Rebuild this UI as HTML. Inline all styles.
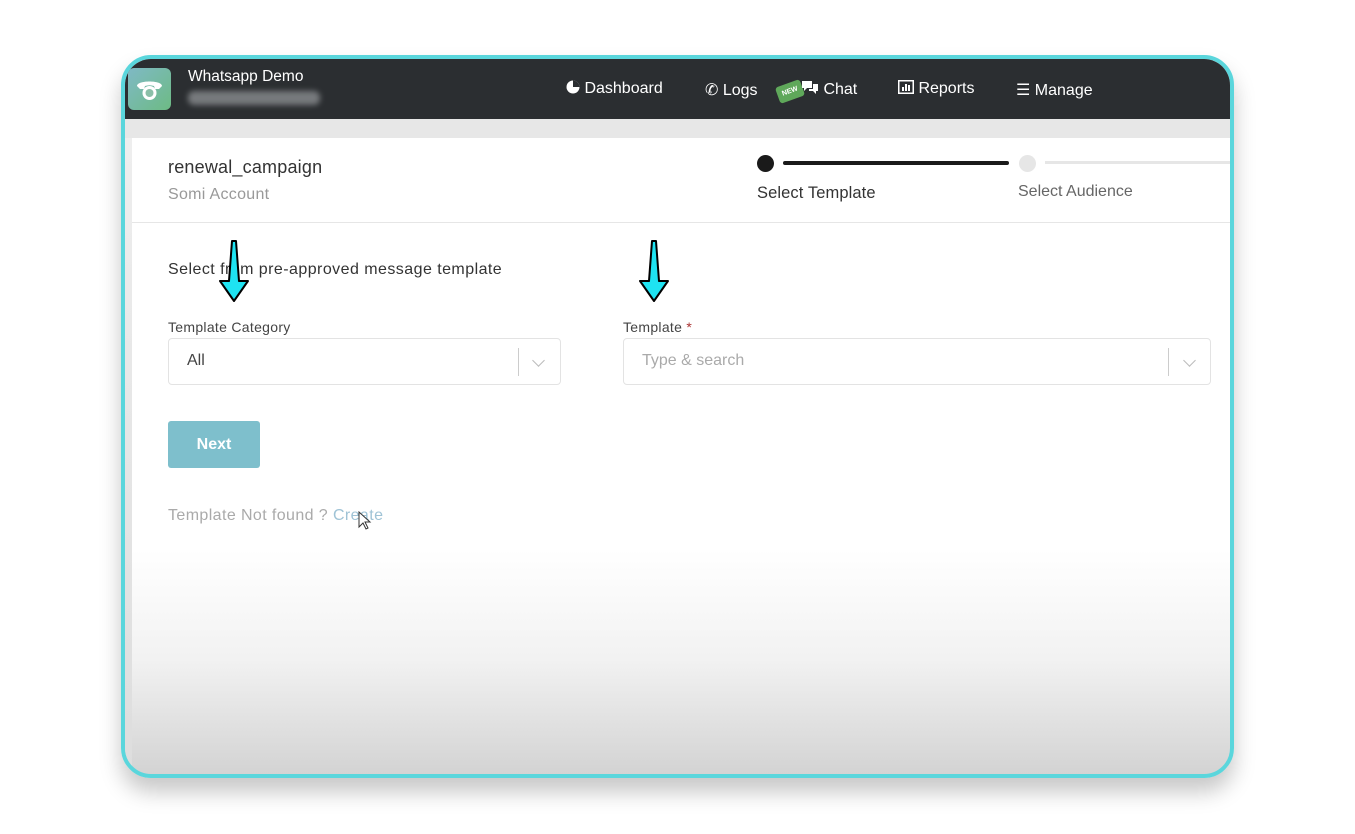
<!DOCTYPE html>
<html><head><meta charset="utf-8"><style>
*{margin:0;padding:0;box-sizing:border-box}
body{width:1355px;height:834px;background:#fff;position:relative;overflow:hidden;font-family:"Liberation Sans",sans-serif}
.frame{position:absolute;left:121px;top:55px;width:1113px;height:723px;border:4px solid #5ad6dc;border-radius:30px;overflow:hidden;box-shadow:0 14px 22px rgba(0,0,0,0.22);background:linear-gradient(#fff 0,#fff 490px,#f2f2f2 600px,#d3d3d3 715px)}
.nav{position:absolute;left:0;top:0;right:0;height:60px;background:#2b2e31;color:#fff}
.logo{position:absolute;left:3px;top:9px;width:43px;height:42px;border-radius:6px;background:linear-gradient(135deg,#7fb9c5,#6dbb84)}
.brand{position:absolute;left:63px;top:9px;font-size:15.5px}
.blur{position:absolute;left:63px;top:32px;width:132px;height:14px;background:#8a8d90;border-radius:6px;filter:blur(3px);opacity:.8}
.nl{position:absolute;top:21px;font-size:16px;color:#fff}
.band{position:absolute;left:0;top:60px;right:0;height:19px;background:#e7e7e7}
.side{position:absolute;left:0;top:79px;width:7px;bottom:0;background:linear-gradient(#eee,#ddd)}
.hdr{position:absolute;left:7px;top:79px;right:0;height:85px;border-bottom:1px solid #e6e6e6}
.t{position:absolute;color:#333;white-space:nowrap}
.sel{position:absolute;height:47px;border:1px solid #e3e3e3;border-radius:4px;background:#fff}
.sel .v{position:absolute;left:18px;top:13px;font-size:16px}
.sel .sep{position:absolute;top:9px;width:1px;height:28px;background:#ccc}
.chev{position:absolute;top:17px;width:9px;height:9px;border-right:1.5px solid #bbb;border-bottom:1.5px solid #bbb;transform:rotate(45deg)}
.btn{position:absolute;left:43px;top:362px;width:92px;height:47px;background:#7ebfcc;border-radius:3px;color:#fff;font-size:16px;font-weight:bold;text-align:center;line-height:47px}
</style></head><body>
<div class="frame">
 <div class="nav">
  <div class="logo"><svg width="43" height="42" viewBox="0 0 43 42"><path d="M9 18c0-6 25-6 25 0l-3 3h-4l-1-3c-3-1-6-1-9 0l-1 3h-4z" fill="#fff"/><circle cx="21.5" cy="25" r="7" fill="#fff"/><circle cx="21.5" cy="25" r="4" fill="#8bbfa8"/></svg></div>
  <div class="brand">Whatsapp Demo</div>
  <div class="blur"></div>
  <div class="nl" style="left:441px"><svg width="14" height="14" viewBox="0 0 14 14" style="vertical-align:-1px"><circle cx="7" cy="7" r="6.5" fill="#fff"/><path d="M7 7V0.5A6.5 6.5 0 0 1 13.5 7z" fill="#2b2e31"/></svg> Dashboard</div>
  <div class="nl" style="left:580px">✆ Logs</div>
  <div style="position:absolute;left:652px;top:24px;width:26px;height:17px;background:#5fa85a;border-radius:3px;transform:rotate(-20deg);font-size:7px;color:#fff;text-align:center;line-height:17px;font-weight:bold">NEW</div>
  <div class="nl" style="left:676px"><svg width="18" height="16" viewBox="0 0 18 16" style="vertical-align:-2px"><path d="M1 1h10v7H6l-3 3V8H1z" fill="#fff"/><path d="M12 4h5v7h-2v3l-3-3H8V9h4z" fill="#fff"/></svg> Chat</div>
  <div class="nl" style="left:773px"><svg width="16" height="14" viewBox="0 0 16 14" style="vertical-align:-1px"><rect x="0.75" y="0.75" width="14.5" height="12.5" fill="none" stroke="#fff" stroke-width="1.5"/><rect x="4" y="7" width="2" height="4" fill="#fff"/><rect x="7" y="4" width="2" height="7" fill="#fff"/><rect x="10" y="5" width="2" height="6" fill="#fff"/></svg> Reports</div>
  <div class="nl" style="left:891px">☰ Manage</div>
 </div>
 <div class="band"></div>
 <div class="side"></div>
 <div class="hdr"></div>
 <div class="t" style="left:43px;top:98px;font-size:18px;letter-spacing:0.2px">renewal_campaign</div>
 <div class="t" style="left:43px;top:127px;font-size:16px;color:#999;letter-spacing:0.3px">Somi Account</div>
 <div style="position:absolute;left:632px;top:96px;width:17px;height:17px;border-radius:50%;background:#1a1a1a"></div>
 <div style="position:absolute;left:658px;top:102px;width:226px;height:4px;background:#1a1a1a;border-radius:2px"></div>
 <div style="position:absolute;left:894px;top:96px;width:17px;height:17px;border-radius:50%;background:#e6e6e6"></div>
 <div style="position:absolute;left:920px;top:102px;width:200px;height:3px;background:#e6e6e6"></div>
 <div class="t" style="left:632px;top:125px;font-size:16.5px;letter-spacing:0.1px">Select Template</div>
 <div class="t" style="left:893px;top:124px;font-size:16px;color:#666">Select Audience</div>
 <div class="t" style="left:43px;top:202px;font-size:16px;letter-spacing:0.45px;color:#333">Select from pre-approved message template</div>
 <div class="t" style="left:43px;top:260px;font-size:14px;color:#444;letter-spacing:0.3px">Template Category</div>
 <div class="t" style="left:498px;top:260px;font-size:14px;color:#444;letter-spacing:0.3px">Template <span style="color:#a33">*</span></div>
 <div class="sel" style="left:43px;top:279px;width:393px"><div class="v" style="color:#444">All</div><div class="sep" style="left:349px"></div><div class="chev" style="left:365px"></div></div>
 <div class="sel" style="left:498px;top:279px;width:588px"><div class="v" style="color:#aaa">Type &amp; search</div><div class="sep" style="left:544px"></div><div class="chev" style="left:561px"></div></div>
 <div class="btn">Next</div>
 <div class="t" style="left:43px;top:448px;font-size:16px;color:#aaa;letter-spacing:0.4px">Template Not found ? <span style="color:#9fc3d6">Create</span></div>
</div>
<svg style="position:absolute;left:214px;top:238px" width="40" height="66" viewBox="0 0 40 66"><path d="M18 3h4l3 40h9L20 63 6 43h9z" fill="#1ee3f2" stroke="#000" stroke-width="2" stroke-linejoin="round"/></svg>
<svg style="position:absolute;left:634px;top:238px" width="40" height="66" viewBox="0 0 40 66"><path d="M18 3h4l3 40h9L20 63 6 43h9z" fill="#1ee3f2" stroke="#000" stroke-width="2" stroke-linejoin="round"/></svg>
<svg style="position:absolute;left:358px;top:511px" width="14" height="20" viewBox="0 0 14 20"><path d="M1 1v15l4-4 3 6 2-1-3-6h5z" fill="#fff" stroke="#333" stroke-width="1"/></svg>
</body></html>
